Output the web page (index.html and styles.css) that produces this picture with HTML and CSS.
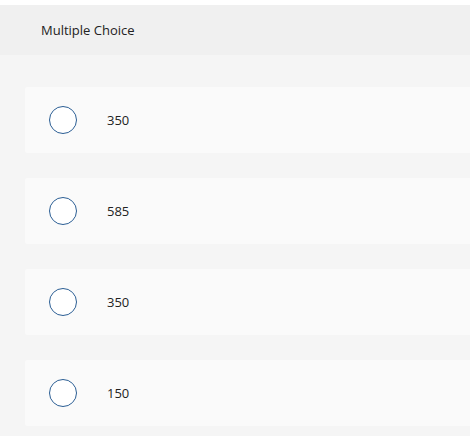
FILE: index.html
```html
<!DOCTYPE html>
<html>
<head>
<meta charset="utf-8">
<link rel="stylesheet" href="styles.css">
</head>
<body>
<div class="page">
  <div class="header">Multiple Choice</div>
  <div class="options">
    <div class="option"><span class="radio"></span><span class="label">350</span></div>
    <div class="option"><span class="radio"></span><span class="label">585</span></div>
    <div class="option"><span class="radio"></span><span class="label">350</span></div>
    <div class="option"><span class="radio"></span><span class="label">150</span></div>
  </div>
</div>
</body>
</html>
```
FILE: styles.css
```css
html, body {
  margin: 0;
  padding: 0;
  background: #ffffff;
  font-family: "Open Sans", "Lato", sans-serif;
  color: #222222;
}
.page {
  margin-top: 5px;
  background: #f5f5f5;
  min-height: 431px;
}
.header {
  height: 50px;
  background: #f0f0f0;
  display: flex;
  align-items: center;
  padding-left: 41px;
  font-size: 13px;
  color: #222;
}
.options {
  padding: 32px 0 10px 25px;
  display: flex;
  flex-direction: column;
  gap: 25px;
}
.option {
  height: 66px;
  background: #fafafa;
  border-radius: 2px 0 0 2px;
  display: flex;
  align-items: center;
  padding-left: 24px;
}
.radio {
  width: 26px;
  height: 26px;
  border: 1.5px solid #2b5e94;
  border-radius: 50%;
  background: #ffffff;
  flex: none;
}
.label {
  margin-left: 30px;
  font-size: 13px;
  color: #222;
}
```
